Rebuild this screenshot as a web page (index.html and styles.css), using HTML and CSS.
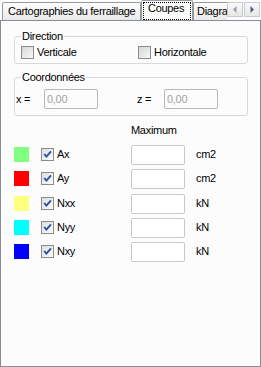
FILE: index.html
```html
<!DOCTYPE html>
<html lang="fr">
<head>
    <meta charset="UTF-8">
    <meta name="viewport" content="width=device-width, initial-scale=1.0">
    <title>Coupes</title>
    <link rel="stylesheet" href="styles.css">
</head>
<body>
    <!-- onglets -->
    <div class="tabbar">
        <div class="tabs">
            <div class="tab tab-first">Cartographies du ferraillage</div>
            <div class="tab tab-active"><span class="focus">Coupes</span></div>
            <div class="tab tab-last">Diagra</div>
        </div>
        <div class="scroller">
            <span class="scroll-btn">
                <svg width="4" height="7" viewBox="0 0 4 7"><path d="M3.5 0 L0 3.5 L3.5 7 Z" fill="#9a9da6"/></svg>
            </span>
            <span class="scroll-btn">
                <svg width="4" height="7" viewBox="0 0 4 7"><path d="M0.5 0 L4 3.5 L0.5 7 Z" fill="#4e5d80"/></svg>
            </span>
        </div>
    </div>

    <div class="panel">
        <fieldset class="group group-dir">
            <legend>Direction</legend>
            <div class="dir-row">
                <label class="opt"><span class="cb"></span>Verticale</label>
                <label class="opt"><span class="cb"></span>Horizontale</label>
            </div>
        </fieldset>

        <fieldset class="group group-coord">
            <legend>Coordonnées</legend>
            <div class="coord-row">
                <span>x =</span>
                <input class="field" type="text" value="0,00" disabled>
                <span>z =</span>
                <input class="field" type="text" value="0,00" disabled>
            </div>
        </fieldset>

        <div class="result-head">Maximum</div>

        <div class="results">
            <span class="swatch" style="background:#80ff80"></span>
            <label class="opt"><span class="cb checked"><svg width="11" height="11" viewBox="0 0 11 11"><path d="M2.2 5 L4.4 7.6 L9 2.4" fill="none" stroke="#2f4ea6" stroke-width="1.9"/></svg></span>Ax</label>
            <input class="field" type="text">
            <span class="unit">cm2</span>

            <span class="swatch" style="background:#ff0000"></span>
            <label class="opt"><span class="cb checked"><svg width="11" height="11" viewBox="0 0 11 11"><path d="M2.2 5 L4.4 7.6 L9 2.4" fill="none" stroke="#2f4ea6" stroke-width="1.9"/></svg></span>Ay</label>
            <input class="field" type="text">
            <span class="unit">cm2</span>

            <span class="swatch" style="background:#ffff80"></span>
            <label class="opt"><span class="cb checked"><svg width="11" height="11" viewBox="0 0 11 11"><path d="M2.2 5 L4.4 7.6 L9 2.4" fill="none" stroke="#2f4ea6" stroke-width="1.9"/></svg></span>Nxx</label>
            <input class="field" type="text">
            <span class="unit">kN</span>

            <span class="swatch" style="background:#00ffff"></span>
            <label class="opt"><span class="cb checked"><svg width="11" height="11" viewBox="0 0 11 11"><path d="M2.2 5 L4.4 7.6 L9 2.4" fill="none" stroke="#2f4ea6" stroke-width="1.9"/></svg></span>Nyy</label>
            <input class="field" type="text">
            <span class="unit">kN</span>

            <span class="swatch" style="background:#0000ff"></span>
            <label class="opt"><span class="cb checked"><svg width="11" height="11" viewBox="0 0 11 11"><path d="M2.2 5 L4.4 7.6 L9 2.4" fill="none" stroke="#2f4ea6" stroke-width="1.9"/></svg></span>Nxy</label>
            <input class="field" type="text">
            <span class="unit">kN</span>
        </div>
    </div>
</body>
</html>
```

FILE: styles.css
```css
body {
    margin: 0;
    width: 261px;
    height: 367px;
    background-color: #fcfcfc;
    font-family: "Liberation Sans", Arial, sans-serif;
    font-size: 11px;
    line-height: 13px;
    letter-spacing: -0.3px;
    color: #000;
}

/* onglets */
.tabbar {
    display: flex;
    height: 20px;
    padding: 0 1px 0 2px;
}
.tabs {
    flex: 1;
    display: flex;
    align-items: flex-end;
    overflow: hidden;
    min-width: 0;
}
.tab {
    flex-shrink: 0;
    height: 18px;
    box-sizing: border-box;
    padding: 2px 4px 0 4px;
    border: 1px solid #919b9c;
    border-bottom: none;
    border-radius: 2px 2px 0 0;
    background: linear-gradient(#fdfdfd, #e9e9e9);
    box-shadow: inset 0 1px 0 #fff;
    white-space: nowrap;
}
.tab-first {
    width: 139px;
    padding-left: 5px;
}
.tab-last {
    flex: 1;
    padding: 2px 0 0 3px;
    border-right: none;
    border-radius: 2px 0 0 0;
}
.tab-active {
    position: relative;
    z-index: 1;
    width: 52px;
    height: 21px;
    margin-bottom: -1px;
    padding: 1px 1px 0 1px;
    background: #fcfcfc;
    box-shadow: none;
}
.focus {
    display: block;
    height: 18px;
    box-sizing: border-box;
    padding: 0 0 0 5px;
    outline: 1px dotted #000;
    outline-offset: -1px;
}
.scroller {
    display: flex;
    align-self: flex-start;
    margin-top: 2px;
}
.scroll-btn {
    display: flex;
    align-items: center;
    justify-content: center;
    width: 16px;
    height: 15px;
    box-sizing: border-box;
    border: 1px solid #c9cbd0;
    background: linear-gradient(#fafafa, #e6e6e6);
}
.scroll-btn + .scroll-btn {
    margin-left: 1px;
}

/* panneau */
.panel {
    height: 347px;
    box-sizing: border-box;
    border: 1px solid #898c95;
    padding: 0 12px 0 13px;
    background-color: #fcfcfc;
}
.group {
    margin: 0;
    min-width: 0;
    border: 1px solid #d5dadf;
    border-radius: 3px;
}
.group legend {
    padding: 0 1px;
    line-height: 13px;
}
.group-dir {
    margin-top: 9px;
    padding: 3px 6px 4px 6px;
}
.group-coord {
    margin-top: 7px;
    padding: 5px 6px 6px 1px;
}
.group-coord legend {
    margin-left: 5px;
}

.dir-row {
    display: grid;
    grid-template-columns: 117px auto;
}
.opt {
    display: flex;
    align-items: center;
    height: 13px;
}
.cb {
    display: flex;
    align-items: center;
    justify-content: center;
    width: 13px;
    height: 13px;
    box-sizing: border-box;
    margin-right: 3px;
    border: 1px solid #8a8c90;
    background: linear-gradient(135deg, #d6d6d6, #f7f7f7);
}
.cb.checked {
    background: linear-gradient(135deg, #dedede, #fafafa);
}

.coord-row {
    display: grid;
    grid-template-columns: 28px 93px 27px 54px;
    align-items: center;
}
.field {
    width: 54px;
    height: 20px;
    box-sizing: border-box;
    margin: 0;
    padding: 0 2px;
    border: 1px solid #c5c9cf;
    border-radius: 2px;
    background: #fff;
    font: inherit;
    letter-spacing: inherit;
    outline: none;
}
.coord-row .field {
    border-color: #b4b8be;
}
.field:disabled {
    color: #a3a3a3;
    background: #fcfcfc;
}

/* résultats */
.result-head {
    margin-top: 8px;
    padding-left: 117px;
}
.results {
    display: grid;
    grid-template-columns: 27px 90px 65px auto;
    grid-auto-rows: 20px;
    row-gap: 4.25px;
    margin-top: 8px;
    align-items: start;
}
.swatch {
    width: 15px;
    height: 15px;
    margin-top: 2px;
}
.results .opt {
    margin-top: 3px;
}
.unit {
    margin-top: 3px;
}
```
